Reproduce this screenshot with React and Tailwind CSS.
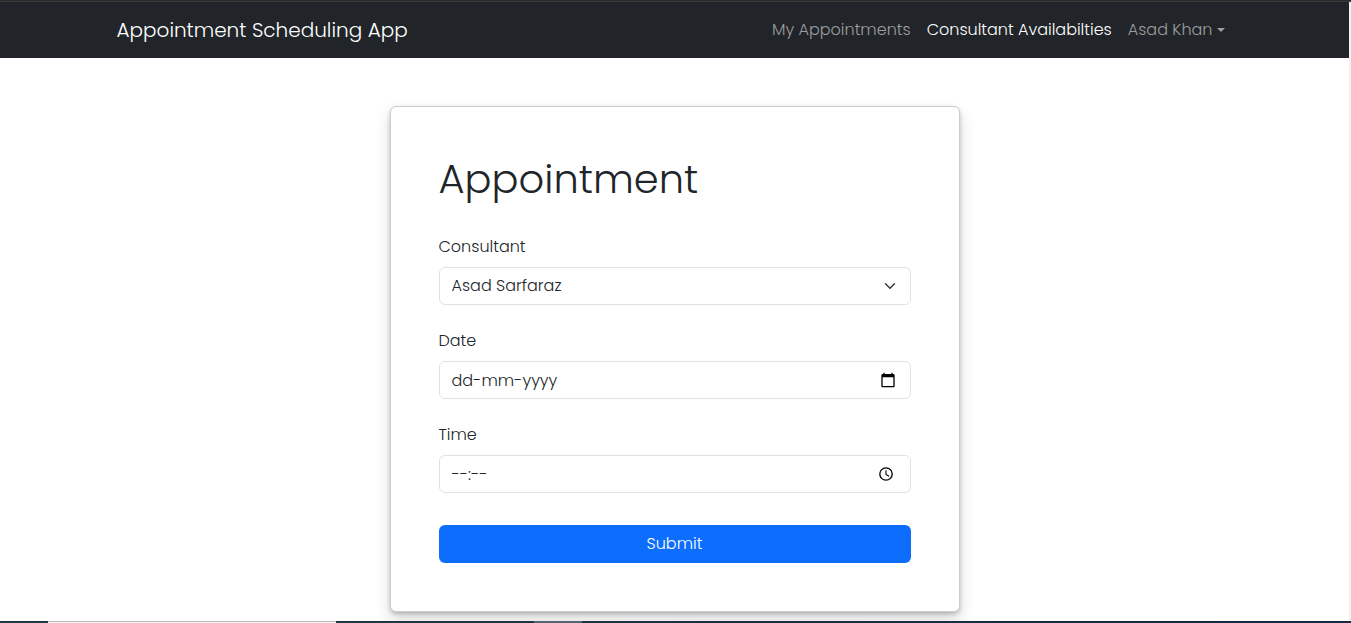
const control =
  "h-[38px] w-full appearance-none rounded-md border border-[#dee2e6] bg-white px-3 text-base font-light text-[#212529] placeholder:text-[#212529] placeholder:opacity-100 outline-none focus:border-[#86b7fe]";

function Field({ id, label, children }) {
  return (
    <div className="mb-6">
      <label htmlFor={id} className="mb-2 block text-base">
        {label}
      </label>
      <div className="relative">{children}</div>
    </div>
  );
}

function Navbar() {
  return (
    <nav className="bg-[#212529] py-2">
      <div className="mx-auto flex max-w-[1140px] items-center justify-between px-3">
        <a href="#home" className="text-xl leading-[30px] text-white">
          Appointment Scheduling App
        </a>
        <ul className="flex text-base">
          <li>
            <a href="#appointments" className="block p-2 text-[#9b9d9e]">
              My Appointments
            </a>
          </li>
          <li>
            <a href="#availabilities" className="block p-2 text-white">
              Consultant Availabilties
            </a>
          </li>
          <li>
            <button type="button" className="flex items-center gap-1 p-2 text-[#9b9d9e]">
              Asad Khan
              <svg width="8" height="4" viewBox="0 0 8 4" fill="currentColor" aria-hidden="true">
                <path d="M0 0h8L4 4z" />
              </svg>
            </button>
          </li>
        </ul>
      </div>
    </nav>
  );
}

export default function App() {
  return (
    <div className="flex min-h-screen flex-col bg-white font-['Poppins','Inter',sans-serif] font-light text-[#212529]">
      <div className="h-0.5 border-b border-[#3c3c3c] bg-[#2b2b2b]" />
      <div className="flex flex-1 flex-col border-r-2 border-[#f1f1f1]">
        <Navbar />
        <main className="mx-auto w-full max-w-[1140px] pt-12 pb-2">
          <form
            className="mx-auto w-1/2 rounded-md border border-[#cccdcd] bg-white p-12 shadow-[0_8px_16px_rgba(0,0,0,0.15),0_2px_4px_rgba(0,0,0,0.2)]"
            onSubmit={(e) => e.preventDefault()}
          >
            <h1 className="mb-8 text-[40px] leading-[48px]">Appointment</h1>
            <Field id="consultant" label="Consultant">
              <select id="consultant" className={control}>
                <option>Asad Sarfaraz</option>
              </select>
              <svg
                className="pointer-events-none absolute top-[13px] right-[15px]"
                width="12"
                height="12"
                viewBox="0 0 16 16"
                fill="none"
                stroke="#343a40"
                strokeWidth="2"
                strokeLinecap="round"
                strokeLinejoin="round"
                aria-hidden="true"
              >
                <path d="m2 5 6 6 6-6" />
              </svg>
            </Field>
            <Field id="date" label="Date">
              <input id="date" type="text" placeholder="dd-mm-yyyy" className={control} />
              <button type="button" aria-label="Pick a date" className="absolute top-[11px] right-[15px]">
                <svg width="16" height="16" viewBox="0 0 24 24" fill="#000" aria-hidden="true">
                  <path d="M20 3h-1V1h-2v2H7V1H5v2H4c-1.100 0-2 .9-2 2v16c0 1.100.9 2 2 2h16c1.100 0 2-.9 2-2V5c0-1.100-.9-2-2-2zm0 18H4V8h16v13z" />
                </svg>
              </button>
            </Field>
            <Field id="time" label="Time">
              <input id="time" type="text" placeholder="--:--" className={control} />
              <button type="button" aria-label="Pick a time" className="absolute top-[11px] right-[17px]">
                <svg width="16" height="16" viewBox="0 0 24 24" fill="none" stroke="#000" strokeWidth="2" aria-hidden="true">
                  <circle cx="12" cy="12" r="9.300" />
                  <path d="M12 6.500V12.500l4.600 2.900" strokeWidth="1.600" />
                </svg>
              </button>
            </Field>
            <button type="submit" className="mt-2 h-[38px] w-full rounded-md bg-[#0d6efd] text-base text-white">
              Submit
            </button>
          </form>
        </main>
      </div>
      <div className="relative flex h-0.5 bg-linear-to-r from-[#243b42] to-[#182742]">
        <div className="ml-12 h-full w-72 border-t border-[#bfbfbf] bg-[#f3f3f3]" />
        <div className="ml-[198px] h-full w-12 bg-[#57666f]" />
      </div>
    </div>
  );
}
